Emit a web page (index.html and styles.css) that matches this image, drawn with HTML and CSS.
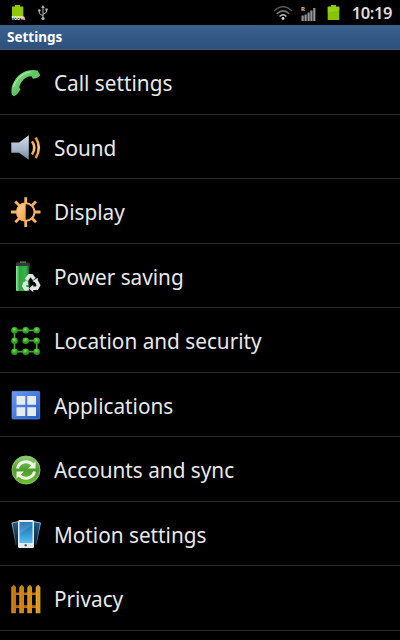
FILE: index.html
```html
<!DOCTYPE html>
<html lang="en">
<head>
<meta charset="UTF-8">
<meta name="viewport" content="width=device-width,initial-scale=1">
<title>Settings</title>
<link rel="stylesheet" href="styles.css">
</head>
<body>

<div class="statusbar">
  <svg class="bat-full" width="18" height="23" viewBox="0 0 18 23">
    <path d="M6 4h5v1.500h3.300V17H3V5.500h3z" fill="#8fc808"/>
    <text x="2" y="19" textLength="14" lengthAdjust="spacingAndGlyphs">100%</text>
  </svg>
  <svg class="usb" width="12" height="18" viewBox="0 0 12 18" fill="none" stroke="#b5b5b5">
    <path d="M6 3v11M6 12L2.300 9.500V7M6 10.500l3.500-2.300V6"/>
    <path d="M6 1L4.300 4h3.400zM8.300 4.500h2.400v2H8.300z" fill="#b5b5b5" stroke="none"/>
    <circle cx="2.300" cy="6.500" r="1.300" fill="#b5b5b5" stroke="none"/>
    <circle cx="6" cy="14.500" r="1.600" fill="#b5b5b5" stroke="none"/>
  </svg>
  <div class="tray">
    <svg class="wifi" width="20" height="16" viewBox="0 0 20 16" fill="none" stroke-width="1.500">
      <path d="M1 6Q10-2.500 19 6" stroke="#555"/>
      <path d="M3.800 8.800Q10 3 16.200 8.800" stroke="#757575"/>
      <path d="M6.600 11.500Q10 8 13.400 11.500" stroke="#bbb"/>
      <circle cx="10" cy="13.500" r="1.400" fill="#ddd"/>
    </svg>
    <svg class="signal" width="15" height="18" viewBox="0 -2 15 18">
      <path d="M.500 9.500h2.200V15H.500zM3.500 8.500h2.200V15H3.500zM6.500 6.500h2.200V15H6.500zM9.300 4.500h2.200V15H9.300zM12.200 2h2.200v13h-2.200z" fill="#959595"/>
      <text x="0" y="5">R</text>
    </svg>
    <svg class="bat" width="13" height="17" viewBox="0 0 13 17">
      <path d="M4 1h5v1.500h3.300V16H.700V2.500H4z" fill="#86c404"/>
      <path d="M.700 3h11.600v3L.700 9z" fill="#a1d630" opacity=".6"/>
    </svg>
    <span class="clock">10:19</span>
  </div>
</div>

<div class="titlebar">Settings</div>

<ul class="list">
  <li class="row">
    <svg class="icon" viewBox="0 0 32 32">
      <defs><linearGradient id="call" x1="0" y1="0" x2="1" y2="1"><stop offset="0" stop-color="#88e58a"/><stop offset=".5" stop-color="#5fc562"/><stop offset="1" stop-color="#8be388"/></linearGradient></defs>
      <path d="M1.700 20.500C4 11.500 11 4 20.500 3.200q3.500-.600 7 .400l2.800 4.700q-3 3.300-7.500 3.400l-1.200-2.500C16 9 11 13.500 9.200 20.300l1.300 2q-2 4.700-6.500 6.900l-2.300-1.700q-.600-3 0-7z" fill="url(#call)"/>
      <path d="M3.500 20C6 12 12 6.500 20.500 4.700" fill="none" stroke="#b9f3b6" stroke-width="1"/>
    </svg>
    <span>Call settings</span>
  </li>
  <li class="row">
    <svg class="icon" viewBox="0 0 32 32">
      <defs>
        <linearGradient id="spk" x1="0" y1="0" x2="0" y2="1"><stop offset="0" stop-color="#d2dee8"/><stop offset=".6" stop-color="#a2b4c4"/><stop offset="1" stop-color="#71808d"/></linearGradient>
        <linearGradient id="wave" x1="0" y1="0" x2="0" y2="1"><stop offset="0" stop-color="#e28c35"/><stop offset=".5" stop-color="#ffca7c"/><stop offset="1" stop-color="#e28c35"/></linearGradient>
      </defs>
      <path d="M1.300 11.500H9l9.800-7.300v24.600L9 21.700H1.300z" fill="url(#spk)"/>
      <path d="M22 10.300q4.600 6.500 0 13.200M25.700 6.500q6.200 10 0 20.500" fill="none" stroke="url(#wave)" stroke-width="2.600"/>
    </svg>
    <span>Sound</span>
  </li>
  <li class="row">
    <svg class="icon" viewBox="0 0 32 32">
      <defs><linearGradient id="sun" x1="0" y1="0" x2="1" y2="1"><stop offset="0" stop-color="#ffd7a0"/><stop offset="1" stop-color="#f0a044"/></linearGradient></defs>
      <path d="M15.700 1.200v6M15.700 25v6M.900 16h6M24.500 16h6M5.300 5.600l4 4M22 22.300l4 4M26 5.600l-4 4M9.300 22.300l-4 4" stroke="#f5b265" stroke-width="2.800"/>
      <circle cx="15.700" cy="16" r="8.800" fill="#0a0603" stroke="#f5b265" stroke-width="2"/>
      <path d="M15.700 7.500a8.500 8.500 0 0 0 0 17z" fill="url(#sun)"/>
    </svg>
    <span>Display</span>
  </li>
  <li class="row">
    <svg class="icon" viewBox="0 0 32 32">
      <defs><linearGradient id="cell"><stop offset="0" stop-color="#9be8a0"/><stop offset=".25" stop-color="#2aa53e"/><stop offset=".75" stop-color="#35b548"/><stop offset="1" stop-color="#0d5a1b"/></linearGradient></defs>
      <path d="M10 1.200h6V4h-6z" fill="#555"/>
      <rect x="6" y="2.700" width="13.500" height="28.300" rx="1" fill="url(#cell)"/>
      <path d="M6 3h13.500v3H6z" fill="#343a38"/>
      <g fill="none" stroke="#dfe5e0" stroke-width="3.600"><path d="M16.300 19.800l3-4h2.400l2.600 3.400M26.500 21.300l2 4-1.600 3h-4M18.800 28.700h-3.300l-1.600-2.700 1.500-3"/></g>
      <path d="M22.300 21l5.500-3.300v6zM23.300 24.700v7.500l-4.300-3.700zM12 23.300l5.300-3.300 1.200 5.600z" fill="#dfe5e0"/>
    </svg>
    <span>Power saving</span>
  </li>
  <li class="row">
    <svg class="icon" viewBox="0 0 32 32">
      <defs><radialGradient id="dot" cx=".45" cy=".35"><stop offset="0" stop-color="#84e860"/><stop offset=".5" stop-color="#44b62f"/><stop offset="1" stop-color="#2c9a1e"/></radialGradient></defs>
      <path d="M26.700 5.300H4.500v21.400h22.200v-11h-11" fill="none" stroke="#4c9c42" stroke-width="1.700"/>
      <g fill="url(#dot)">
        <circle cx="4.500" cy="5.300" r="3.300"/><circle cx="15.700" cy="5.300" r="3.300"/><circle cx="26.700" cy="5.300" r="3.300"/>
        <circle cx="4.500" cy="15.800" r="3.300"/><circle cx="15.700" cy="15.800" r="3.300"/><circle cx="26.700" cy="15.800" r="3.300"/>
        <circle cx="4.500" cy="26.700" r="3.300"/><circle cx="15.700" cy="26.700" r="3.300"/><circle cx="26.700" cy="26.700" r="3.300"/>
      </g>
    </svg>
    <span>Location and security</span>
  </li>
  <li class="row">
    <svg class="icon" viewBox="0 0 32 32">
      <defs><linearGradient id="app" x1="0" y1="0" x2="1" y2="1"><stop offset="0" stop-color="#6b9af0"/><stop offset="1" stop-color="#245bc9"/></linearGradient></defs>
      <rect x="2" y="2.300" width="27.700" height="27.700" rx="1" fill="url(#app)" stroke="#5d8fe5" stroke-width=".7"/>
      <path d="M6.500 7h8.700v8.700H6.500zM17.300 7H26v8.700h-8.700zM6.500 18.300h8.700V27H6.500zM17.300 18.300H26V27h-8.700z" fill="#e7ebf0"/>
    </svg>
    <span>Applications</span>
  </li>
  <li class="row">
    <svg class="icon" viewBox="0 0 32 32">
      <defs><linearGradient id="sync" x1="0" y1="0" x2="0" y2="1"><stop offset="0" stop-color="#93cf75"/><stop offset=".5" stop-color="#4f9c2c"/><stop offset="1" stop-color="#6fc22e"/></linearGradient></defs>
      <circle cx="16" cy="16" r="14" fill="url(#sync)" stroke="#82c662"/>
      <path d="M7.500 14.500C9 7.500 18 5.500 23 11M24.500 17.500C23 24.500 14 26.500 9 21" fill="none" stroke="#eef5e8" stroke-width="3"/>
      <path d="M25.500 7.500v7h-7.500zM6.500 24.500v-7H14z" fill="#eef5e8"/>
    </svg>
    <span>Accounts and sync</span>
  </li>
  <li class="row">
    <svg class="icon" viewBox="0 0 32 32">
      <defs><linearGradient id="scr" x1="0" y1="0" x2="0" y2="1"><stop offset="0" stop-color="#1266a8"/><stop offset="1" stop-color="#55bef2"/></linearGradient>
      <linearGradient id="ghost" x1="0" y1="0" x2="0" y2="1"><stop offset="0" stop-color="#1d5f94"/><stop offset="1" stop-color="#0a1d2b"/></linearGradient>
      <linearGradient id="edge" x1="0" y1="0" x2="0" y2="1"><stop offset="0" stop-color="#a5b5c0"/><stop offset="1" stop-color="#26323a"/></linearGradient></defs>
      <path d="M8 3.500l-6 1.300L6 27l3-1zM24 3.500l6.500 1.300L26 27l-3-1z" fill="url(#ghost)"/>
      <path d="M6 27L2 5l6-1.300M26 27l4.500-22L24 3.700" fill="none" stroke="url(#edge)"/>
      <rect x="8" y="2" width="16" height="28" rx="1.500" fill="#e5ebef"/>
      <path d="M9.500 4h13v21h-13z" fill="url(#scr)"/>
      <path d="M9.500 4h13v3l-13 9z" fill="#fff" opacity=".13"/>
      <circle cx="15.700" cy="27.300" r="1.200" fill="#555d66"/>
    </svg>
    <span>Motion settings</span>
  </li>
  <li class="row">
    <svg class="icon" viewBox="0 0 32 32">
      <defs><linearGradient id="wood"><stop offset="0" stop-color="#c26f12"/><stop offset="1" stop-color="#dba012"/></linearGradient></defs>
      <path d="M2 9.500h28v2.600H2zM2 22.300h28v2.600H2z" fill="#b96f0c"/>
      <path d="M1.500 4L3.800 1.700 6 4v26.300H1.500zM9.500 4l2.300-2.300L14 4v26.300H9.500zM17.500 4l2.300-2.300L22 4v26.300h-4.500zM25.800 4l2.300-2.300L30.400 4v26.300h-4.600z" fill="url(#wood)"/>
      <path d="M2 4.200v26M10 4.200v26M18 4.200v26M26.300 4.200v26" stroke="#efa63a" stroke-width=".8"/>
    </svg>
    <span>Privacy</span>
  </li>
</ul>

</body>
</html>
```
FILE: styles.css
```css
html,body { margin:0; padding:0; height:100%; background:#000; overflow:hidden; font-family:'Noto Sans','Open Sans',sans-serif; }
body { display:flex; flex-direction:column; color:#e8e8e8; }

.statusbar { flex:none; display:flex; align-items:center; height:25px; padding:0 8px 0 9px; }
.bat-full text { font-size:6px; font-weight:700; fill:#fff; }
.usb { margin-left:10px; }
.tray { display:flex; align-items:center; margin-left:auto; }
.wifi { margin-right:1px; }
.signal { margin-left:7px; }
.signal text { font-size:6px; font-weight:700; fill:#ccc; }
.bat { margin-left:11px; }
.clock { margin-left:12px; font-size:16.5px; line-height:25px; font-weight:600; letter-spacing:-.4px; color:#dcdcdc; }

.titlebar { flex:none; box-sizing:border-box; height:25px; padding-left:7px; font-size:13.5px; line-height:24px; font-weight:700; color:#fff;
  background:linear-gradient(#3c628f,#2d507c); border-bottom:1px solid #4a5a70; }

.list { flex:none; margin:0; padding:.4px 0 0; list-style:none; }
.row { display:flex; align-items:center; box-sizing:border-box; height:64.5px; padding-left:10px; border-bottom:1px solid #2b2b2b; font-size:22px; }
.icon { flex:none; width:32px; height:32px; margin:1px 12px 0 0; }
.row span { line-height:30px; white-space:nowrap; transform:scaleX(.943); transform-origin:left; }
```
